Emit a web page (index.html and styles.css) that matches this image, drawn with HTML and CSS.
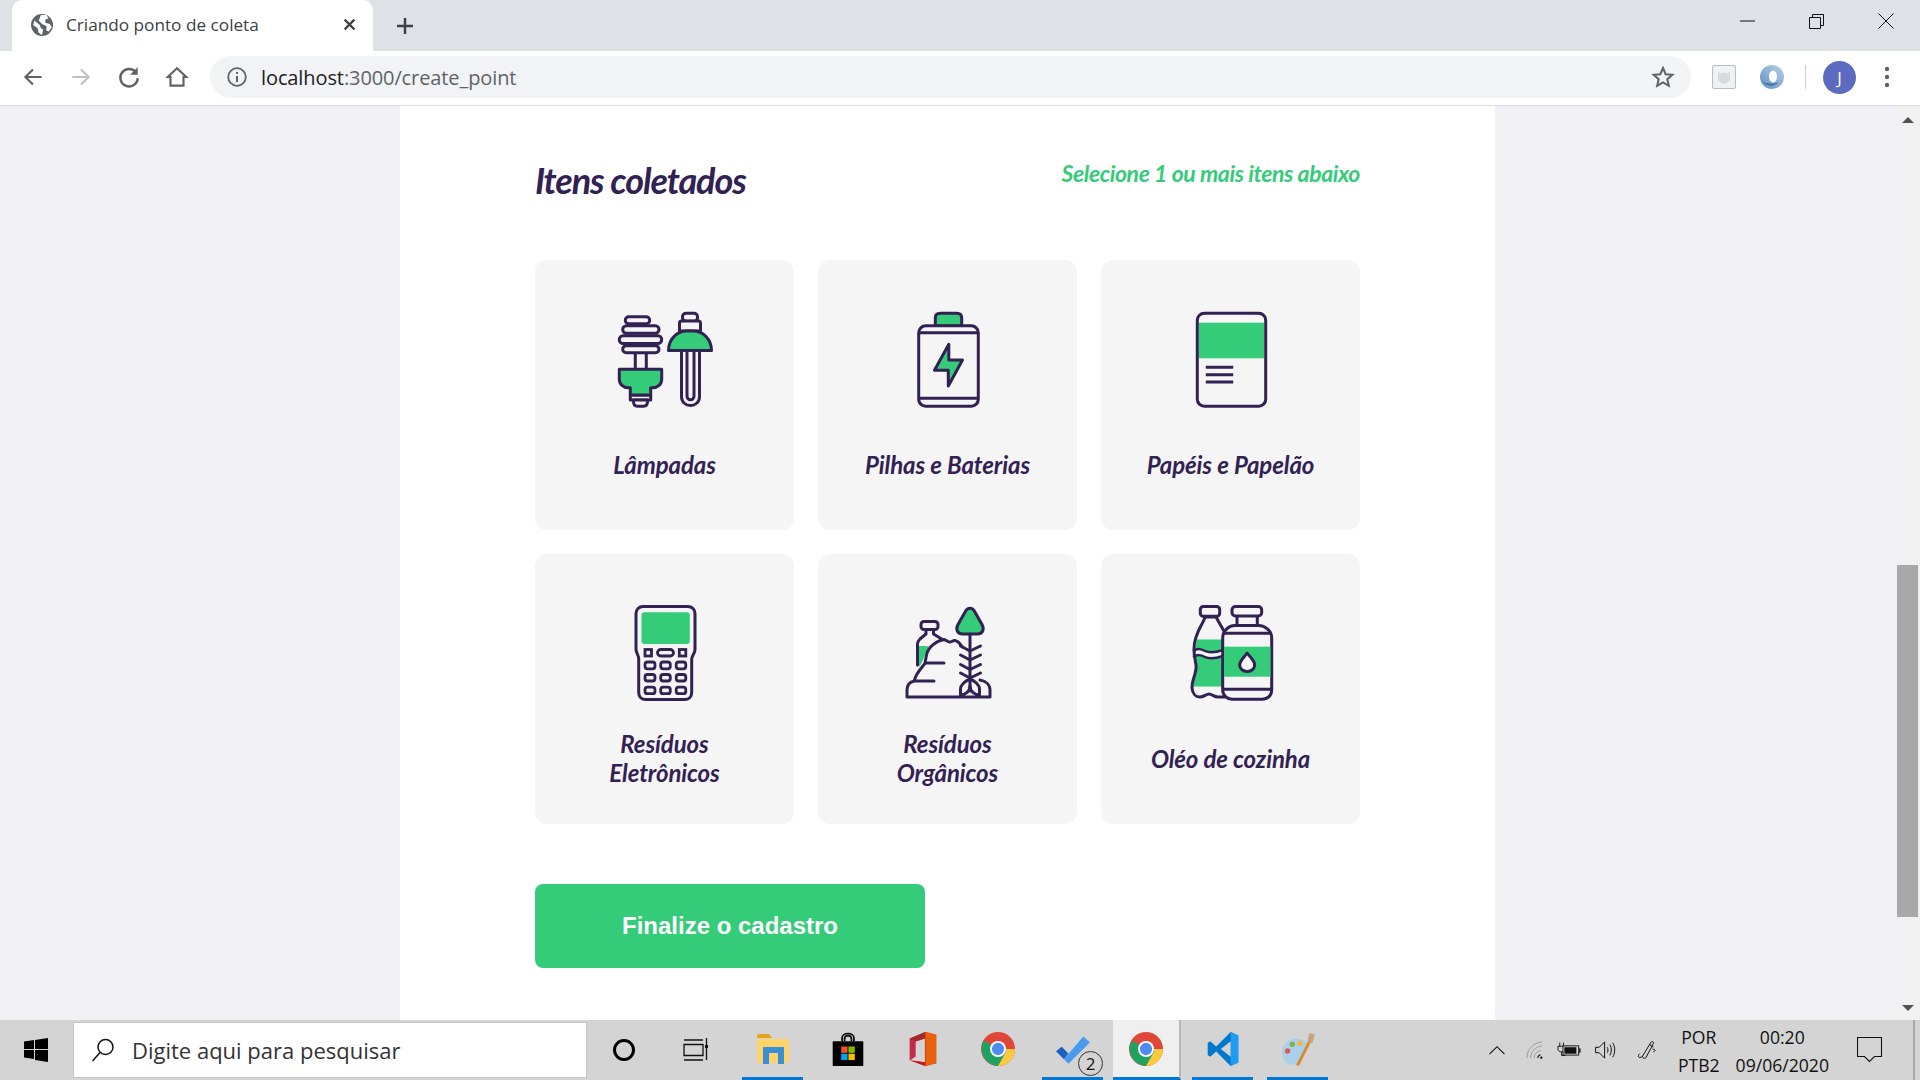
FILE: index.html
```html
<!DOCTYPE html>
<html lang="pt-BR">
<head>
<meta charset="utf-8">
<title>Criando ponto de coleta</title>
<link rel="stylesheet" href="styles.css">
</head>
<body>
<div class="screen">
  <header class="tabbar">
    <div class="tab">
      <svg class="tab-globe" viewBox="0 0 20 20"><circle cx="10" cy="10" r="10" fill="#5f6368"/><path d="M3 6l5 4 1 3 2 1-1 5-3-2-1-4-4-3zM9 1l5 0 2 3-3 1 0 3 4 1 2 3-3 4-2-1 0-4-4-2-3-3z" fill="#fff"/></svg>
      <span class="tab-title">Criando ponto de coleta</span>
      <svg class="tab-close" viewBox="0 0 12 12"><path d="M1.500 1.500l9 9M10.500 1.500l-9 9" stroke="#3c4043" stroke-width="2" fill="none"/></svg>
    </div>
    <svg class="tab-new" viewBox="0 0 18 18"><path d="M9 1v16M1 9h16" stroke="#3c4043" stroke-width="2.500" fill="none"/></svg>
    <div class="win-controls">
      <svg class="win-btn" viewBox="0 0 16 16"><path d="M0 8h15" stroke="#111" stroke-width="1" fill="none"/></svg>
      <svg class="win-btn" viewBox="0 0 16 16"><path d="M.5 4.500h11v11h-11zM3.500 4.500v-3h11v11h-3" stroke="#111" stroke-width="1" fill="none"/></svg>
      <svg class="win-btn" viewBox="0 0 16 16"><path d="M.5.500l15 15M15.500.500l-15 15" stroke="#111" stroke-width="1" fill="none"/></svg>
    </div>
  </header>

  <nav class="toolbar">
    <svg class="nav-icon" viewBox="0 0 24 24"><path d="M20 12H5M12 5l-7 7 7 7" stroke="#5f6368" stroke-width="2" fill="none"/></svg>
    <svg class="nav-icon" viewBox="0 0 24 24"><path d="M4 12h15M12 5l7 7-7 7" stroke="#bdc1c6" stroke-width="2" fill="none"/></svg>
    <svg class="nav-icon" viewBox="0 0 24 24"><path d="M18.500 8A8 8 0 1 0 20 13" stroke="#5f6368" stroke-width="2.200" fill="none"/><path d="M20 3v7h-7z" fill="#5f6368"/></svg>
    <svg class="nav-icon" viewBox="0 0 24 24"><path d="M12 4L3.500 12H6v8h12v-8h2.500z" stroke="#5f6368" stroke-width="2" fill="none"/></svg>
    <div class="omnibox">
      <svg class="omni-info" viewBox="0 0 20 20"><circle cx="10" cy="10" r="8.800" stroke="#5f6368" stroke-width="1.800" fill="none"/><path d="M9 9h2v6H9zM9 5h2v2H9z" fill="#5f6368"/></svg>
      <span class="url"><span class="url-host">localhost</span>:3000/create_point</span>
      <svg class="omni-star" viewBox="0 0 24 24"><path d="M12 3l2.700 6.200 6.700.6-5.100 4.400 1.500 6.600L12 17.300l-5.800 3.500 1.500-6.600-5.100-4.400 6.700-.6z" stroke="#5f6368" stroke-width="2" fill="none"/></svg>
    </div>
    <div class="ext-shield"><svg viewBox="0 0 14 14"><path d="M1 2l3 1.500 3-1 3 1L13 2v7c0 2-3 4-6 5-3-1-6-3-6-5z" fill="#d5dadc"/></svg></div>
    <svg class="ext-ring" viewBox="0 0 24 24"><defs><linearGradient id="ring" x1="0" y1="1" x2="1" y2="0"><stop offset="0" stop-color="#5e8fc0"/><stop offset="1" stop-color="#b9d2e8"/></linearGradient></defs><circle cx="12" cy="12" r="12" fill="url(#ring)"/><ellipse cx="13" cy="11.500" rx="4" ry="6" fill="#fff"/><path d="M3 17c4 5 12 5 16 0-4 2-10 2-16 0z" fill="#3f74aa"/></svg>
    <div class="toolbar-sep"></div>
    <div class="avatar">J</div>
    <svg class="kebab" viewBox="0 0 6 22"><circle cx="3" cy="3" r="2.200"/><circle cx="3" cy="11" r="2.200"/><circle cx="3" cy="19" r="2.200"/></svg>
  </nav>

  <div class="viewport">
    <main class="page">
      <section class="sheet">
        <div class="sheet-head">
          <h2 class="sheet-title">Itens coletados</h2>
          <span class="sheet-hint">Selecione 1 ou mais itens abaixo</span>
        </div>
        <ul class="items">
          <li class="item">
            <svg class="item-icon" viewBox="0 0 100 100">
              <g fill="#f5f5f5" stroke="#322153" stroke-width="3" stroke-linejoin="round">
                <path d="M20.300 42v16M31.300 42v16" fill="none"/>
                <rect x="10.300" y="5.800" width="24.400" height="7" rx="3.500"/>
                <rect x="7.700" y="14.800" width="36.300" height="7.500" rx="3.700"/>
                <rect x="4.300" y="24.800" width="42.400" height="7.700" rx="3.800"/>
                <rect x="7.700" y="34.800" width="36.300" height="7" rx="3.500"/>
                <path d="M15.300 84h20.400v5H15.300z"/>
                <path d="M18.500 89h14v1.500c0 3-1.500 4.700-4 4.700h-6c-2.500 0-4-1.700-4-4.700z"/>
                <path d="M4.300 58.200h42.400v10c0 5-4 8.500-9 8.500h-2V84H15.300v-7.300h-2c-5 0-9-3.500-9-8.500z" fill="#34cb79"/>
                <rect x="67.500" y="2.200" width="15" height="8" rx="3.500"/>
                <path d="M64.500 20v-8c0-1.200.8-2 2-2h17c1.200 0 2 .8 2 2v8z"/>
                <path d="M66.500 39.500v46c0 12 18 12 18 0v-46z"/>
                <path d="M72 39.500V85c0 5 7 5 7 0V39.500" fill="none"/>
                <path d="M53.500 39.500C53.500 28 62 20 72 20h6c10 0 18.500 8 18.500 19.500z" fill="#34cb79"/>
              </g>
            </svg>
            <span class="item-label">Lâmpadas</span>
          </li>
          <li class="item">
            <svg class="item-icon" viewBox="0 0 100 100">
              <g fill="none" stroke="#322153" stroke-width="3" stroke-linejoin="round" stroke-linecap="round">
                <path d="M37.300 15V7c0-3 2-4.800 5-4.800h16.400c3 0 5 1.800 5 4.800v8z" fill="#34cb79"/>
                <rect x="20.700" y="14.800" width="59.600" height="80.400" rx="7" fill="#f5f5f5"/>
                <path d="M20.700 21.700h59.600M20.700 87.300h59.600" stroke-linecap="butt"/>
                <path d="M50.800 33.300L36.500 59.300H50.300V75L64.500 49H50.800z" fill="#34cb79"/>
              </g>
            </svg>
            <span class="item-label">Pilhas e Baterias</span>
          </li>
          <li class="item">
            <svg class="item-icon" viewBox="0 0 100 100">
              <rect x="17.800" y="11.700" width="65.400" height="35.600" fill="#34cb79"/>
              <g fill="none" stroke="#322153">
                <rect x="16.300" y="2.200" width="68.400" height="93" rx="7" stroke-width="3"/>
                <path d="M24.800 56.300h27.400M24.800 63.700h27.400M24.800 71h27.400" stroke-width="3"/>
              </g>
            </svg>
            <span class="item-label">Papéis e Papelão</span>
          </li>
          <li class="item">
            <svg class="item-icon" viewBox="0 0 100 100">
              <rect x="26.500" y="7.300" width="48.300" height="31.700" rx="3" fill="#34cb79"/>
              <g fill="none" stroke="#322153" stroke-width="3">
                <path d="M21 8.500c0-4 3-7 7-7h45c4 0 7 3 7 7v36c0 4-3.300 6-3.300 10v33c0 4.500-3 7-7 7H30.700c-4 0-7-2.500-7-7V54c0-4-2.700-6-2.700-10z"/>
                <g stroke-width="2.800">
                  <rect x="30" y="44.500" width="6.500" height="6.500"/>
                  <rect x="64.300" y="44.500" width="6.500" height="6.500"/>
                  <rect x="42.500" y="44.500" width="16" height="6.500" rx="3.200"/>
                  <rect x="30" y="57" width="10" height="6.800" rx="2.500"/>
                  <rect x="45.700" y="57" width="9.600" height="6.800" rx="2.500"/>
                  <rect x="61.200" y="57" width="9.600" height="6.800" rx="2.500"/>
                  <rect x="30" y="69.500" width="10" height="6.500" rx="2.500"/>
                  <rect x="45.700" y="69.500" width="9.600" height="6.500" rx="2.500"/>
                  <rect x="61.200" y="69.500" width="9.600" height="6.500" rx="2.500"/>
                  <rect x="30" y="82.200" width="10" height="6.500" rx="2.500"/>
                  <rect x="45.700" y="82.200" width="9.600" height="6.500" rx="2.500"/>
                  <rect x="61.200" y="82.200" width="9.600" height="6.500" rx="2.500"/>
                </g>
              </g>
            </svg>
            <span class="item-label">Resíduos Eletrônicos</span>
          </li>
          <li class="item">
            <svg class="item-icon" viewBox="0 0 100 100">
              <path d="M21 41h10c-4 6-5 15-10 21z" fill="#34cb79"/>
              <path d="M72 3.200c-2 0-3.500 1-4.500 3L60 19.500c-2.500 4.500-1 9.500 4.500 9.500h15c5.500 0 7-5 4.500-9.500L76.500 6.200c-1-2-2.500-3-4.500-3z" fill="#34cb79"/>
              <g fill="none" stroke="#322153" stroke-width="3" stroke-linecap="round" stroke-linejoin="round">
                <path d="M72 3.200c-2 0-3.500 1-4.500 3L60 19.500c-2.500 4.500-1 9.500 4.500 9.500h15c5.500 0 7-5 4.500-9.500L76.500 6.200c-1-2-2.500-3-4.500-3z"/>
                <path d="M72 29v57"/>
                <path d="M62.500 41l9.500 5 10.500-5M62.500 50l9.500 5 10.500-5M62.500 59.500l9.500 5 10.500-5M62.500 68l9.500 5 10.500-5"/>
                <path d="M72 74c-5 2-9.500 6-9.500 10v6c5 0 9.500-4 9.500-9 0 5 4.500 9 9.500 9v-6c0-4-4.500-8-9.500-10z"/>
                <path d="M16 76c-4 1-7 4-7 9v7h83v-7c0-5-4-9-10-10"/>
                <rect x="23" y="16.500" width="17" height="8" rx="3"/>
                <path d="M28 25v4l-6 5c-2 2-2.500 3-2.500 5v21M35.500 25v4l9 5.500"/>
                <path d="M46 34.500C38 36 30 42 28.500 50L27 58c-1 3-8 8-10.500 17"/>
                <path d="M46 34.500c3 1 4 2.500 6 2.500s3-2 5-1.500c3 .5 5 3 7.500 6.500"/>
                <path d="M27.500 58h18.500M16 76h20"/>
              </g>
            </svg>
            <span class="item-label">Resíduos Orgânicos</span>
          </li>
          <li class="item">
            <svg class="item-icon" viewBox="0 0 100 100">
              <path d="M24 12C22 20 13 28 13 44c0 12 3 14 2 20-1 8-4.500 12-4 19 .5 6 4 9 8 9s6-3 9-3 5 3 9 3h7V28L35 12z" fill="#f5f5f5"/>
              <path d="M16 34.500h27v47H12c.5-5.500 3-9.500 4-17.500 1-6-2-8-2-20z" fill="#34cb79"/>
              <path d="M12 49c5-3 8-2 12 0s9 2 18-1" fill="none" stroke="#f5f5f5" stroke-width="6"/>
              <path d="M12 46c5-3 8-2 12 0s9 2 18-1M12 52c5-3 8-2 12 0s9 2 18-1" fill="none" stroke="#322153" stroke-width="2.500"/>
              <g fill="none" stroke="#322153" stroke-width="3" stroke-linejoin="round">
                <path d="M24 12C22 20 13 28 13 44c0 12 3 14 2 20-1 8-4.500 12-4 19 .5 6 4 9 8 9s6-3 9-3 5 3 9 3h7V28L35 12z"/>
                <rect x="19.300" y="1.500" width="19.400" height="9.800" rx="3" fill="#f5f5f5"/>
                <path d="M56 11v9.500M76.300 11v9.500"/>
                <rect x="51" y="1.500" width="29.700" height="9.500" rx="3.500" fill="#f5f5f5"/>
                <path d="M41.700 33c0-7 6-12.500 12-12.500h24c6 0 13 5 13 12.500v52c0 5.500-4 9.200-9.500 9.200H51c-5 0-9.300-3.700-9.300-9.200z" fill="#f5f5f5"/>
              </g>
              <rect x="43" y="41.700" width="46.500" height="30" fill="#34cb79"/>
              <path d="M43 28.300h46M41.700 84.300h49" fill="none" stroke="#322153" stroke-width="3"/>
              <path d="M66.200 48c-3 4.500-7.500 7.500-7.500 12 0 4 3.500 6.500 7.500 6.500s7.500-2.500 7.500-6.500c0-4.500-4.500-7.500-7.500-12z" fill="#f5f5f5" stroke="#322153" stroke-width="3" stroke-linejoin="round"/>
            </svg>
            <span class="item-label">Oléo de cozinha</span>
          </li>
        </ul>
        <button class="submit">Finalize o cadastro</button>
      </section>
    </main>
    <aside class="scrollbar">
      <span class="arrow-up"></span>
      <div class="track"><div class="thumb"></div></div>
      <span class="arrow-down"></span>
    </aside>
  </div>

  <footer class="taskbar">
    <svg class="start" viewBox="0 0 24 24"><path d="M0 3.500l10-1.400V11H0zM11 2l13-2v11H11zM0 12h10v9L0 19.500zM11 12h13v12l-13-2z" fill="#000"/></svg>
    <div class="search">
      <svg class="search-icon" viewBox="0 0 24 24"><circle cx="14.500" cy="9" r="7.500" stroke="#111" stroke-width="1.500" fill="none"/><path d="M9 14.500L1.500 23" stroke="#111" stroke-width="1.500"/></svg>
      <span class="search-text">Digite aqui para pesquisar</span>
    </div>
    <svg class="cortana" viewBox="0 0 24 24"><circle cx="12" cy="12" r="9.500" stroke="#000" stroke-width="3" fill="none"/></svg>
    <svg class="taskview" viewBox="0 0 26 24"><path d="M1 2h19M1 6.500h19v11H1zM1 22h19M23.500 0v22" stroke="#111" stroke-width="1.300" fill="none"/><rect x="22" y="7" width="3" height="3" fill="#111"/></svg>
    <div class="apps">
      <div class="app running"><svg viewBox="0 0 34 32"><path d="M1 3c0-1 1-2 2-2h10l3 4H1z" fill="#e0a718"/><path d="M1 6h30c1 0 2 1 2 2v20c0 1-1 2-2 2H3c-1 0-2-1-2-2z" fill="#ffd46b"/><path d="M7 31V14h21v17h-6V20H13v11z" fill="#3b8fd6"/></svg></div>
      <div class="app"><svg viewBox="0 0 36 40"><path d="M11 11V7c0-7 14-7 14 0v4M14 11V8c0-5 8-5 8 0v3" fill="none" stroke="#000" stroke-width="2"/><rect x="0" y="11" width="36" height="29" rx="1" fill="#000"/><rect x="10" y="17" width="7.500" height="7.500" fill="#f25022"/><rect x="18.500" y="17" width="7.500" height="7.500" fill="#7fba00"/><rect x="10" y="25.500" width="7.500" height="7.500" fill="#00a4ef"/><rect x="18.500" y="25.500" width="7.500" height="7.500" fill="#ffb900"/></svg></div>
      <div class="app"><svg viewBox="0 0 28 36"><path d="M0 7L17 0l11 3v30l-11 3L0 30l16 2V7L6 10v16l-6 4z" fill="#d83b01"/><path d="M17 0l11 3v30l-11 3z" fill="#e6620e"/><path d="M0 7l6 3v16l-6 4z" fill="#c22a52"/><path d="M6 10l10-3v-7L0 7z" fill="#a5262f"/><path d="M0 30l16 2v4z" fill="#c5162b"/></svg></div>
      <div class="app"><svg viewBox="0 0 36 36"><use href="#chrome-mark"/></svg></div>
      <div class="app running badge-app"><svg viewBox="0 0 30 26"><path d="M0 15l5-4 6 6-4 5z" fill="#1e5fc2"/><path d="M7 22L24 2l6 5-19 19z" fill="#4a9bf0"/></svg><span class="app-badge">2</span></div>
      <div class="app active"><svg viewBox="0 0 36 36"><defs><g id="chrome-mark"><circle cx="18" cy="18" r="18" fill="#e0473a"/><path d="M18 18L3 9A18 18 0 0 0 18 36l9-15z" fill="#1fa25f"/><path d="M18 18h18A18 18 0 0 1 18 36l9-16z" fill="#fbca3e"/><circle cx="18" cy="18" r="8.500" fill="#fff"/><circle cx="18" cy="18" r="6.500" fill="#4d8bf0"/></g></defs><use href="#chrome-mark"/></svg></div>
      <div class="app running"><svg viewBox="0 0 36 40"><path d="M27 0l9 4v32l-9 4L10 23 3 29l-3-2v-14l3-2 7 6z" fill="#0079cc"/><path d="M27 0l9 4v32l-9 4z" fill="#1f9cf0"/><path d="M27 11L15.500 20 27 29z" fill="#d4d4d4"/></svg></div>
      <div class="app running"><svg viewBox="0 0 36 36"><path d="M1 22C1 10 13 5 22 8c6 2 7 6 6 9L17 34C11 36 1 34 1 22z" fill="#a9cfea"/><circle cx="7" cy="20" r="2.800" fill="#e2574c"/><circle cx="12" cy="13" r="2.800" fill="#7cb342"/><circle cx="20" cy="12" r="2.800" fill="#f4b93a"/><path d="M16 35L29 9l3 1-13 26z" fill="#d98b2b"/><path d="M28 10l2-9 6 2-3 9z" fill="#c8a27a"/></svg></div>
    </div>
    <div class="tray">
      <svg class="tray-chevron" viewBox="0 0 20 12"><path d="M1 11l9-9 9 9" stroke="#111" stroke-width="1.300" fill="none"/></svg>
      <svg class="tray-wifi" viewBox="0 0 20 20"><path d="M1 19C1 9 8 2 18 1M5 19C5 12 11 6 18 5.500M9 19c0-4 3-8 8-8.500" stroke="#9a9a9a" stroke-width="1.100" fill="none"/><path d="M13 19c0-2 1-3 3-4" stroke="#111" stroke-width="1.200" fill="none"/><circle cx="17" cy="18.500" r="1.300" fill="#111"/></svg>
      <svg class="tray-battery" viewBox="0 0 26 16"><path d="M3 0v4M7 0v4M1 4h8v3c0 2-2 3-4 3s-4-1-4-3zM5 10v4h4" stroke="#111" stroke-width="1" fill="none"/><rect x="6.500" y="3.500" width="17" height="10" fill="#d4d4d4" stroke="#111"/><rect x="8" y="5" width="13" height="7" fill="#111"/><path d="M24 6h1.500v5H24z" fill="#111"/></svg>
      <svg class="tray-sound" viewBox="0 0 24 20"><path d="M1 7h4l6-6v18l-6-6H1z" stroke="#111" stroke-width="1.100" fill="none"/><path d="M14 7c1 2 1 4 0 6M17 4c2 4 2 8 0 12M20 2c3 5 3 11 0 16" stroke="#111" stroke-width="1.100" fill="none"/></svg>
      <svg class="tray-pen" viewBox="0 0 22 22"><path d="M6 18L15 3c1-2 4-1 3 1L10 19c-1 2-4 1-4-1zM14 5l4 3M6 18c-4 3-6 0-3-3" stroke="#111" stroke-width="1.100" fill="none"/><path d="M17 10c3 0 4 2 1 3" stroke="#111" stroke-width="1.100" fill="none"/></svg>
      <div class="tray-lang"><span>POR</span><span>PTB2</span></div>
      <div class="tray-clock"><span>00:20</span><span>09/06/2020</span></div>
      <svg class="tray-notify" viewBox="0 0 26 26"><path d="M.5.500h24v19h-7l-5 5-5-5h-7z" stroke="#111" stroke-width="1.100" fill="none"/></svg>
      <div class="tray-peek"></div>
    </div>
  </footer>
</div>
</body>
</html>
```

FILE: styles.css
```css
* { box-sizing: border-box; margin: 0; padding: 0; }
html, body { width: 100%; height: 100%; overflow: hidden; }
body { font-family: "Open Sans", "Liberation Sans", sans-serif; color: #202124; }

.screen { display: flex; flex-direction: column; height: 100vh; }

/* tab strip */
.tabbar { flex: 0 0 51px; display: flex; align-items: flex-end; background: #dee1e6; padding-left: 12px; }
.tab { width: 361px; height: 51px; background: #fff; border-radius: 10px 10px 0 0; display: flex; align-items: center; padding: 0 17px 2px 19px; }
.tab-globe { width: 22px; height: 22px; flex: none; }
.tab-title { flex: 1; margin-left: 13px; font-size: 17.2px; color: #3c4043; white-space: nowrap; }
.tab-close { width: 13px; height: 13px; flex: none; }
.tab-new { width: 18px; height: 18px; margin: 0 0 16px 23px; flex: none; }
.win-controls { margin-left: auto; align-self: flex-start; display: flex; gap: 53px; padding: 13px 26px 0 0; }
.win-btn { width: 16px; height: 16px; display: block; }

/* toolbar */
.toolbar { flex: 0 0 55px; display: flex; align-items: center; background: #fff; border-bottom: 1px solid #dadce0; padding: 0 0 2px 20px; }
.nav-icon { width: 26px; height: 26px; flex: none; margin-right: 22px; }
.omnibox { width: 1481px; margin-left: -2px; height: 42px; border-radius: 21px; background: #f1f3f4; display: flex; align-items: center; padding: 0 16px 0 17px; flex: none; }
.omni-info { width: 20px; height: 20px; flex: none; }
.url { flex: 1; margin-left: 14px; font-size: 20px; letter-spacing: -.1px; color: #5f6368; white-space: nowrap; }
.url-host { color: #202124; }
.omni-star { width: 24px; height: 24px; flex: none; }
.ext-shield { width: 24px; height: 24px; margin-left: 21px; border: 1px solid #b6bec6; border-radius: 2px; background: #f0f1f2; display: flex; align-items: center; justify-content: center; flex: none; }
.ext-shield svg { width: 14px; height: 14px; }
.ext-ring { width: 24px; height: 24px; margin-left: 24px; flex: none; }
.toolbar-sep { width: 1px; height: 24px; margin-left: 21px; background: #c8ccd0; flex: none; }
.avatar { width: 33px; height: 33px; margin-left: 17px; border-radius: 50%; background: #5c6bc0; color: #fff; font-size: 17px; display: flex; align-items: center; justify-content: center; flex: none; }
.kebab { width: 6px; height: 22px; margin-left: 28px; fill: #5f6368; flex: none; }

/* page */
.viewport { flex: 1; min-height: 0; display: flex; background: #f0f0f5; }
.page { flex: 1; min-width: 0; display: flex; justify-content: center; overflow: hidden; }
.sheet { width: 1095px; background: #fff; padding: 43px 135px 0; font-family: Lato, sans-serif; }
.sheet-head { display: flex; justify-content: space-between; align-items: flex-start; }
.sheet-title { font-size: 36px; line-height: 62px; font-weight: 700; font-style: italic; letter-spacing: -1.1px; color: #322153; }
.sheet-hint { font-size: 23px; line-height: 48px; font-weight: 700; font-style: italic; letter-spacing: -.4px; color: #34cb79; }
.items { list-style: none; display: grid; grid-template-columns: repeat(3, 259px); gap: 24px 24px; margin-top: 49px; }
.item { height: 270px; border-radius: 12px; background: #f5f5f5; display: flex; flex-direction: column; align-items: center; padding: 50.6px 40px 12px; }
.item-icon { width: 100px; height: 100px; flex: none; display: block; }
.item-label { flex: 1; display: flex; align-items: center; text-align: center; font-size: 24px; line-height: 29px; font-weight: 700; font-style: italic; letter-spacing: -.1px; color: #322153; }
.submit { display: block; width: 390px; height: 84px; margin-top: 60px; border: 0; border-radius: 8px; background: #34cb79; color: #fff; font-family: "Liberation Sans", Arial, sans-serif; font-size: 24px; font-weight: 700; }

/* scrollbar */
.scrollbar { flex: 0 0 25px; display: flex; flex-direction: column; align-items: center; background: #f1f1f1; padding: 0 2px; }
.arrow-up { margin-top: 11px; border: 6px solid transparent; border-top: 0; border-bottom: 6px solid #505050; }
.arrow-down { margin-bottom: 9px; border: 6px solid transparent; border-bottom: 0; border-top: 6px solid #505050; }
.track { flex: 1; width: 100%; padding-top: 442px; padding-bottom: 88px; }
.thumb { height: 100%; background: #a8a8a8; }

/* taskbar */
.taskbar { flex: 0 0 60px; display: flex; align-items: center; background: #d4d4d4; padding-left: 24px; color: #111; }
.start { width: 24px; height: 24px; flex: none; }
.search { width: 514px; height: 56px; margin-left: 25px; background: #fff; border: 1px solid #c6c6c6; display: flex; align-items: center; padding-left: 17px; flex: none; }
.search-icon { width: 24px; height: 24px; flex: none; }
.search-text { margin-left: 17px; font-size: 22px; color: #333; white-space: nowrap; }
.cortana { width: 24px; height: 24px; margin-left: 25px; flex: none; }
.taskview { width: 26px; height: 24px; margin-left: 47px; flex: none; }
.apps { display: flex; margin-left: 33px; height: 60px; gap: 14px; }
.app { position: relative; width: 61px; height: 60px; display: flex; align-items: center; justify-content: center; border-bottom: 3px solid transparent; flex: none; }
.app svg { width: 34px; height: 34px; }
.app.running { border-bottom-color: #0078d4; }
.app.active { width: 68px; margin: 0 -2.5px 0 -4.5px; background: #efefef; border-bottom-color: #0078d4; border-right: 2px solid #b8b8b8; }
.app-badge { position: absolute; right: 0; bottom: 1px; width: 25px; height: 25px; border: 1px solid #333; border-radius: 50%; background: #d4d4d4; font-size: 17px; line-height: 23px; text-align: center; color: #111; }
.tray { margin-left: auto; display: flex; align-items: center; height: 60px; padding-right: 5px; }
.tray-chevron { width: 18px; height: 10px; flex: none; }
.tray-wifi { width: 18px; height: 18px; margin-left: 20px; flex: none; }
.tray-battery { width: 24px; height: 16px; margin-left: 13px; flex: none; }
.tray-sound { width: 23px; height: 18px; margin-left: 13px; flex: none; }
.tray-pen { width: 22px; height: 20px; margin-left: 19px; flex: none; }
.tray-lang, .tray-clock { display: flex; flex-direction: column; align-items: center; font-size: 17.6px; line-height: 28px; padding-top: 2px; white-space: nowrap; }
.tray-lang { margin-left: 20px; }
.tray-clock { margin-left: 16px; }
.tray-notify { width: 26px; height: 26px; margin-left: 28px; flex: none; }
.tray-peek { width: 2px; height: 60px; margin-left: 30px; background: #a8a8a8; flex: none; }
```
